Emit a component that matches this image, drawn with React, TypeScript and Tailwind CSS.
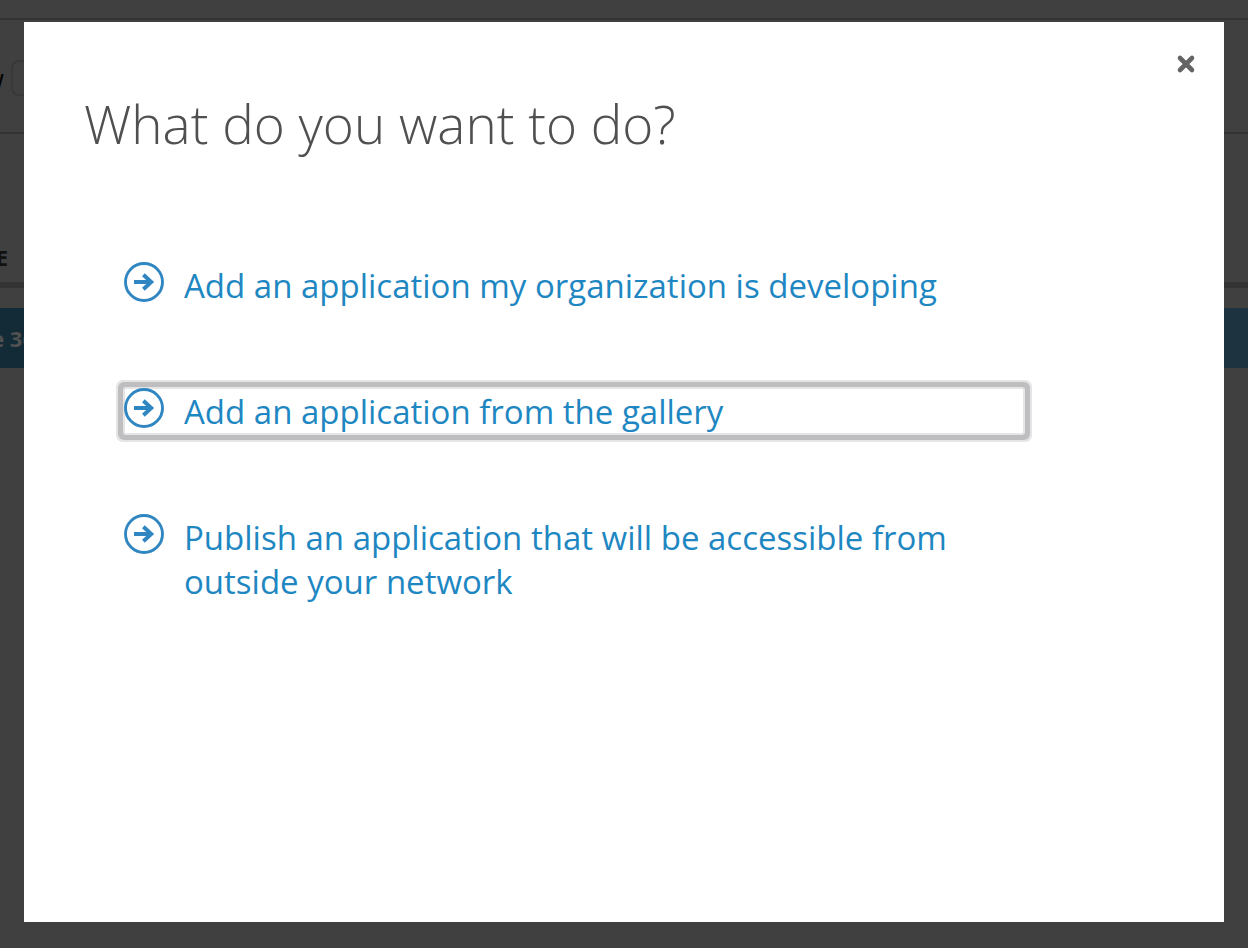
import React from "react";

const options = [
  { label: "Add an application my organization is developing", focused: false },
  { label: "Add an application from the gallery", focused: true },
  { label: "Publish an application that will be accessible from outside your network", focused: false },
];

function ArrowCircle() {
  return (
    <svg className="h-10 w-10 shrink-0" viewBox="0 0 40 40" fill="none" stroke="#2f86c1" aria-hidden="true">
      <circle cx="20" cy="20" r="18.5" strokeWidth="2.9" />
      <path d="M10 20H28" strokeWidth="4" />
      <path d="M19.4 12.8L27.2 20L19.4 27.2" strokeWidth="4" />
    </svg>
  );
}

function Backdrop() {
  return (
    <div className="fixed inset-0 overflow-hidden bg-[#404040]" aria-hidden="true">
      <div className="h-5 border-b-2 border-[#333333]" />
      <div className="flex h-[114px] items-center gap-[7px] border-b-2 border-[#333333] pt-1">
        <span className="flex w-1 shrink-0 justify-end text-[26px] text-black">w</span>
        <div className="h-9 w-80 rounded-lg border-2 border-[#383838]" />
      </div>
      <div className="flex h-[154px] items-end border-b-6 border-[#333333] pb-[13px]">
        <span className="flex w-2 justify-end text-[22px] font-bold leading-6 text-[#111111]">E</span>
      </div>
      <div className="mt-5 flex h-[60px] items-center bg-[#132b37]">
        <span className="flex w-[35px] justify-end whitespace-nowrap text-[22px] font-bold text-[#505050]">e 36</span>
        <span className="ml-auto h-full w-10 bg-[#1d333f]" />
      </div>
    </div>
  );
}

export default function App() {
  return (
    <div className="font-['Open_Sans','Noto_Sans',sans-serif]">
      <Backdrop />
      <div className="fixed inset-0 flex px-6 pt-[22px] pb-[26px]">
        <main
          role="dialog"
          aria-modal="true"
          aria-labelledby="dialog-title"
          className="flex flex-1 flex-col overflow-auto bg-white"
        >
          <div className="flex justify-end px-7 pt-8">
            <button type="button" aria-label="Close" className="flex h-5 w-5 items-center justify-center">
              <svg className="h-5 w-5" viewBox="0 0 20 20" stroke="#646464" strokeWidth="4.6" strokeLinecap="round" aria-hidden="true">
                <path d="M4 4L16 16M16 4L4 16" />
              </svg>
            </button>
          </div>
          <h1 id="dialog-title" className="px-[60px] pt-3 text-[53px] font-light leading-[76px] text-[#505050]">
            What do you want to do?
          </h1>
          <ul className="flex w-full max-w-[1000px] flex-col gap-20 pt-[100px] pl-[100px]">
            {options.map((option) => (
              <li key={option.label}>
                <button
                  type="button"
                  className={
                    "flex w-full items-start gap-5 text-left text-[33px] leading-11 text-[#1e87c2] outline-none " +
                    (option.focused
                      ? "rounded-xs shadow-[inset_0_0_0_1px_#e5e5e6,0_0_0_1px_#e5e5e6,0_0_0_6px_#bebec0,0_0_0_8px_#e5e5e6]"
                      : "")
                  }
                >
                  <ArrowCircle />
                  <span className="max-w-[800px] pt-0.5">{option.label}</span>
                </button>
              </li>
            ))}
          </ul>
        </main>
      </div>
    </div>
  );
}
